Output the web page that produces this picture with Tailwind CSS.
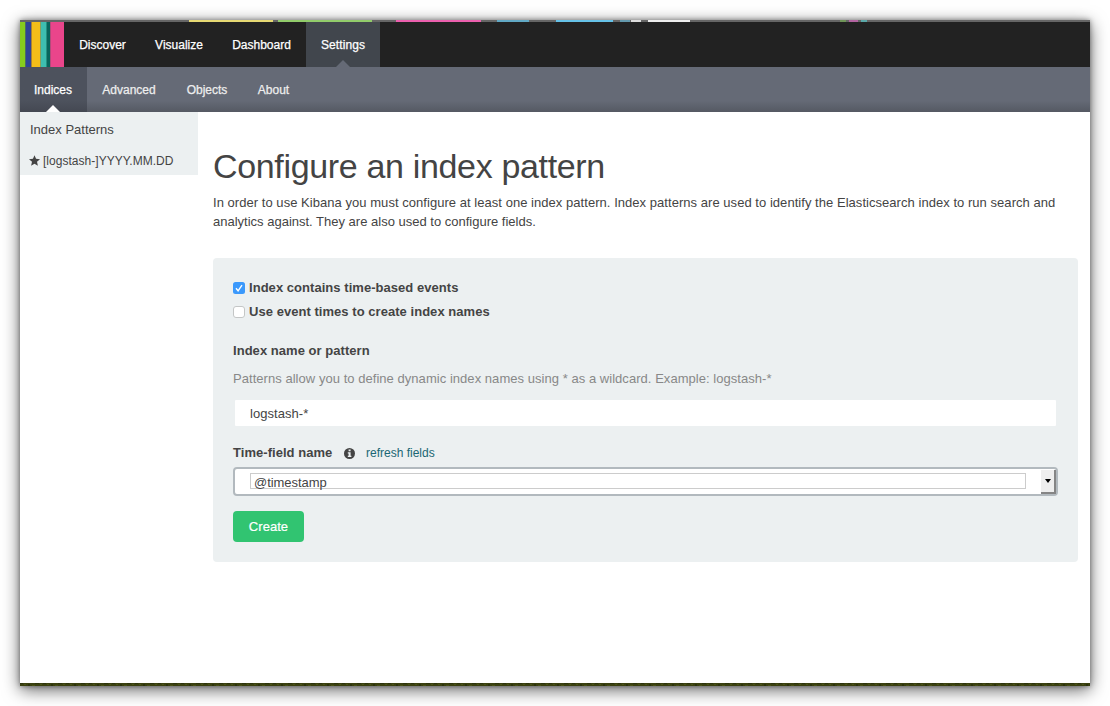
<!DOCTYPE html>
<html lang="en">
<head>
<meta charset="utf-8">
<title>Settings - Kibana</title>
<script src="https://cdn.jsdelivr.net/npm/@tailwindcss/browser@4"></script>
</head>
<body class="h-[706px] overflow-hidden bg-white px-5 pt-5 font-['Liberation_Sans',Arial,sans-serif] text-[13px] leading-[18px] text-[#444]">
<div class="flex h-[666px] w-[1070px] flex-col bg-white shadow-[0_4px_16px_rgba(0,0,0,0.6),0_0_5px_rgba(0,0,0,0.4)]">
  <svg class="block h-[2px] w-full shrink-0" viewBox="0 0 1070 2" preserveAspectRatio="none">
    <rect width="1070" height="2" fill="#666"/>
    <rect x="169" width="84" height="2" fill="#e6d973"/><rect x="258" width="94" height="2" fill="#92cc6b"/>
    <rect x="376" width="85" height="2" fill="#ec60ae"/><rect x="477" width="32" height="2" fill="#62a9c5"/>
    <rect x="536" width="57" height="2" fill="#66c2e8"/><rect x="600" width="10" height="2" fill="#6499ad"/>
    <rect x="611" width="10" height="2" fill="#ddd"/><rect x="628" width="42" height="2" fill="#eee"/>
    <rect x="820" width="6" height="2" fill="#6f9458"/><rect x="829" width="9" height="2" fill="#b264a0"/><rect x="841" width="6" height="2" fill="#5ba8a8"/>
  </svg>
  <nav class="flex h-[45px] shrink-0 bg-[#222] text-[12px] text-white [-webkit-text-stroke:0.25px]">
    <svg class="h-[45px] w-[44px]" viewBox="0 0 44 45">
      <rect width="5" height="45" fill="#86cc1e"/><rect x="5" width="1" height="45" fill="#4c6d63"/><rect x="6" width="5" height="45" fill="#2f4496"/><rect x="11" width="1" height="45" fill="#a78137"/>
      <rect x="12" width="8" height="45" fill="#f3bd19"/><rect x="20" width="1" height="45" fill="#8d9d58"/><rect x="21" width="5" height="45" fill="#3ebeb0"/><rect x="26" width="1" height="45" fill="#269080"/>
      <rect x="27" width="3" height="45" fill="#07665c"/><rect x="30" width="1" height="45" fill="#b34a7a"/><rect x="31" width="13" height="45" fill="#ea458b"/>
    </svg>
    <a class="flex w-[77px] items-center justify-center">Discover</a>
    <a class="flex w-[76px] items-center justify-center">Visualize</a>
    <a class="flex w-[89px] items-center justify-center">Dashboard</a>
    <a class="relative flex w-[74px] items-center justify-center bg-[#41464d] tracking-[0.1px]">Settings
      <svg class="absolute bottom-0 left-[30px] h-[7px] w-[14px]" viewBox="0 0 14 7"><path d="M0 7 7 0l7 7z" fill="#656a76"/></svg></a>
  </nav>
  <nav class="flex h-[45px] shrink-0 bg-linear-to-b from-[#656a76] from-75% to-[#555963] text-[12px] text-[#eee] [-webkit-text-stroke:0.25px]">
    <a class="relative flex w-[67px] items-center justify-center bg-linear-to-b from-[#4d525d] from-75% to-[#444852] pr-px text-white">Indices
      <svg class="absolute bottom-0 left-[26px] h-[7px] w-[14px]" viewBox="0 0 14 7"><path d="M0 7 7 0l7 7z" fill="#fff"/></svg></a>
    <a class="flex w-[84px] items-center justify-center">Advanced</a>
    <a class="flex w-[72px] items-center justify-center">Objects</a>
    <a class="flex w-[61px] items-center justify-center">About</a>
  </nav>
  <div class="flex min-h-0 flex-1">
    <aside class="h-[63px] w-[178px] shrink-0 bg-[#ecf0f1] pt-[9px]">
      <h5 class="pl-[10px] whitespace-nowrap">Index Patterns</h5>
      <div class="mt-[13px] flex items-center pl-[9px] text-[12px] whitespace-nowrap">
        <svg class="mr-[3px] -mt-px h-[11px] w-[11px]" viewBox="0 0 22 21"><path d="M11 0l3.1 7 7.9.8-6 5.2 1.800 8L11 17l-6.800 4L6 13 0 7.800 7.900 7z" fill="#444"/></svg>
        <span class="tracking-[0.03px]">[logstash-]YYYY.MM.DD</span>
      </div>
    </aside>
    <main class="ml-[15px] w-[865px] pt-[33px] tracking-[0.042px]">
      <h1 class="text-[34px] leading-[42px] tracking-[-0.34px] whitespace-nowrap">Configure an index pattern</h1>
      <p class="mt-[7px] leading-[18.5px] whitespace-nowrap">In order to use Kibana you must configure at least one index pattern. Index patterns are used to identify the Elasticsearch index to run search and<br><span class="tracking-normal">analytics against. They are also used to configure fields.</span></p>
      <form class="mt-[27px] h-[304px] rounded-[4px] bg-[#ecf0f1] px-5 pt-[21px] whitespace-nowrap">
        <label class="flex items-center font-bold">
          <svg class="mr-1 h-[12px] w-[12px]" viewBox="0 0 12 12"><rect width="12" height="12" rx="2.5" fill="#3b99fc"/><path d="M3 6.300 5.100 8.800 9 3.200" fill="none" stroke="#fff" stroke-width="1.400"/></svg>
          <span>Index contains time-based events</span></label>
        <label class="mt-[6px] flex items-center font-bold">
          <svg class="mr-1 h-[12px] w-[12px]" viewBox="0 0 12 12"><rect x=".5" y=".5" width="11" height="11" rx="2.500" fill="#fff" stroke="#c4c6c6"/></svg>
          <span>Use event times to create index names</span></label>
        <div class="mt-[21px] font-bold"><span>Index name or pattern</span></div>
        <p class="mt-[10px] text-[#888]"><span>Patterns allow you to define dynamic index names using * as a wildcard. Example: logstash-*</span></p>
        <div class="mt-[12px] ml-[2px] flex h-[26px] w-[821px] items-center rounded-[1px] bg-white pt-px pl-[15px]"><span>logstash-*</span></div>
        <div class="mt-[18px] flex items-center">
          <span class="w-[111px] font-bold">Time-field name</span>
          <svg class="h-[11px] w-[11px]" viewBox="0 0 11 11"><circle cx="5.500" cy="5.500" r="5.500" fill="#444"/><path d="M4.600 1.500h2v1.700h-2zM3.800 4.300h2.800v3.500h.8v1.200H3.800V7.800h.8V5.500h-.8z" fill="#ecf0f1"/></svg>
          <a class="ml-[11px] text-[12px] tracking-normal text-[#1a6774]">refresh fields</a>
        </div>
        <div class="mt-[5px] flex h-[29px] w-[825px] rounded-[4px] border-2 border-[#b2b9be] bg-white">
          <div class="mt-[4px] ml-[15px] flex h-[16px] w-[776px] items-center border border-[#ccc] pt-[3px] pl-[3px]"><span class="tracking-[-0.05px]">@timestamp</span></div>
          <div class="mt-px ml-[15px] flex h-[24px] w-[15px] items-center justify-center border-r-2 border-b-2 border-[#858585] bg-[#eee]">
            <svg class="h-[4px] w-[6px]" viewBox="0 0 6 4"><path d="M0 0h6L3 4z" fill="#000"/></svg></div>
        </div>
        <button type="button" class="mt-[15px] flex h-[31px] w-[71px] items-center justify-center rounded-[4px] bg-[#31c471] pt-px text-white [-webkit-text-stroke:0.2px]">Create</button>
      </form>
    </main>
  </div>
  <svg class="block h-[3px] w-full shrink-0" viewBox="0 0 1070 3">
    <defs><pattern id="grass" width="23" height="3" patternUnits="userSpaceOnUse"><rect width="23" height="3" fill="#3a4010"/><path d="M0 0h3v1H0zM8 1h2v2H8zM15 0h4v1h-4z" fill="#2c330c"/><path d="M4 1h2v1H4zM12 2h3v1h-3zM20 1h2v1h-2z" fill="#485116"/></pattern></defs>
    <rect width="1070" height="3" fill="url(#grass)"/>
  </svg>
</div>
</body>
</html>
